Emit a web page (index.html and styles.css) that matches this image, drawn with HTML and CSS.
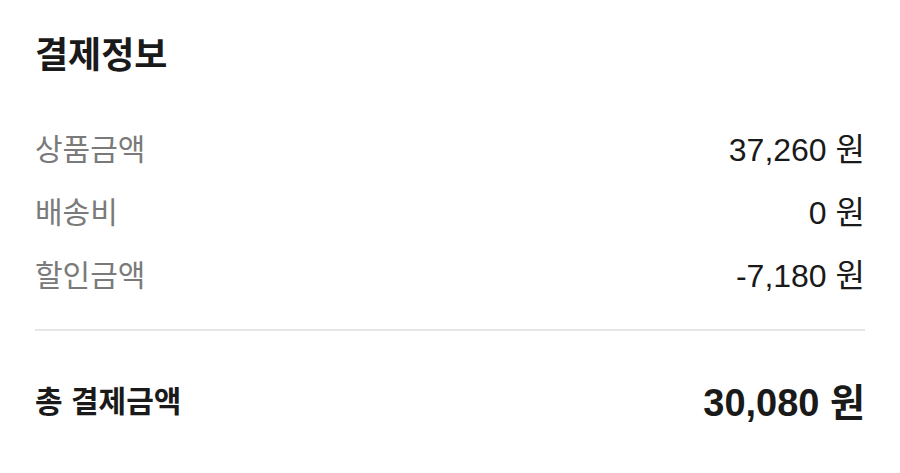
FILE: index.html
```html
<!DOCTYPE html>
<html lang="ko">
<head>
<meta charset="utf-8">
<link rel="stylesheet" href="styles.css">
</head>
<body>
<section class="payment">
  <h2 class="title">결제정보</h2>
  <div class="rows">
    <div class="row"><span class="label">상품금액</span><span class="value">37,260 원</span></div>
    <div class="row"><span class="label">배송비</span><span class="value">0 원</span></div>
    <div class="row"><span class="label">할인금액</span><span class="value">-7,180 원</span></div>
  </div>
  <div class="divider"></div>
  <div class="total">
    <span class="total-label">총 결제금액</span>
    <span class="total-value">30,080 원</span>
  </div>
</section>
</body>
</html>
```
FILE: styles.css
```css
html, body {
  margin: 0;
  padding: 0;
  background: #ffffff;
}
body {
  font-family: "Noto Sans CJK KR", "Noto Sans", sans-serif;
  color: #1a1a1a;
}
.payment {
  padding: 32px 35px 0 35px;
}
.title {
  margin: 0;
  font-size: 36px;
  line-height: 40px;
  font-weight: 700;
  color: #1a1a1a;
}
.rows {
  margin-top: 43px;
  display: flex;
  flex-direction: column;
}
.row {
  display: flex;
  justify-content: space-between;
  align-items: center;
  height: 63px;
}
.label {
  font-size: 30px;
  color: #7a7a7a;
  font-weight: 400;
}
.value {
  font-family: "Liberation Sans", "Noto Sans CJK KR", sans-serif;
  font-size: 32px;
  color: #1a1a1a;
}
.divider {
  margin-top: 25px;
  height: 2px;
  background: #e6e6e6;
}
.total {
  margin-top: 43px;
  height: 50px;
  display: flex;
  justify-content: space-between;
  align-items: center;
}
.total-label {
  font-size: 30px;
  font-weight: 700;
  color: #1a1a1a;
}
.total-value {
  font-family: "Liberation Sans", "Noto Sans CJK KR", sans-serif;
  font-size: 38px;
  font-weight: 700;
  color: #1a1a1a;
}
```
